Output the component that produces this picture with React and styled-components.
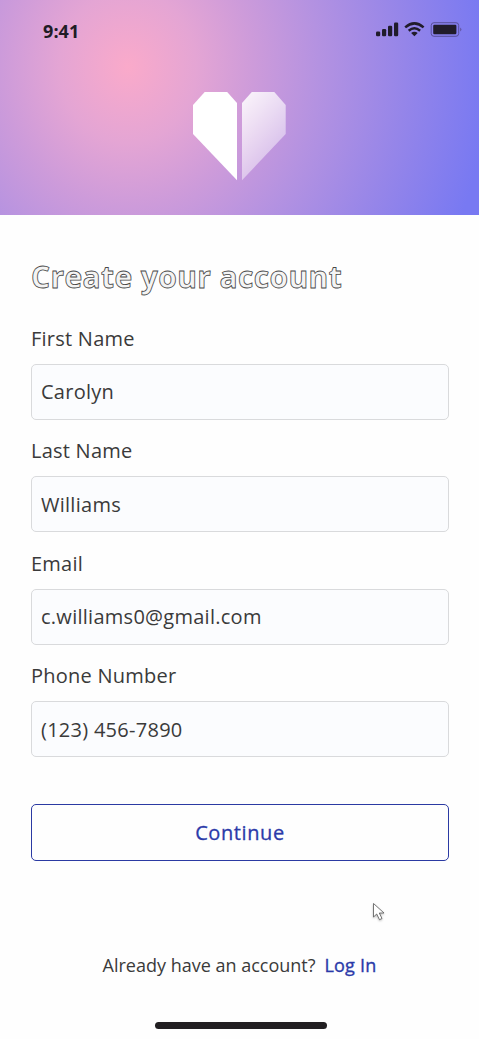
import React from "react";
import styled, { createGlobalStyle } from "styled-components";

const GlobalStyle = createGlobalStyle`
  * { box-sizing: border-box; }
  body { margin: 0; background: #fefefe; font-family: "Open Sans", sans-serif; color: #3a3a3a; }
`;

const Screen = styled.div`
  position: relative;
  display: flex;
  flex-direction: column;
  width: 479px;
  height: 1039px;
  overflow: hidden;
  background: #fefefe;
`;

const Header = styled.header`
  display: flex;
  flex-direction: column;
  align-items: center;
  flex: none;
  height: 215px;
  background: radial-gradient(ellipse 360px 400px at 128px 67px, #faaaca 0%, #e4a5d4 19%, #cd9bda 35%, #b492e1 53%, #9585e9 77%, #7879f2 100%);
`;

const StatusBar = styled.div`
  display: flex;
  justify-content: space-between;
  align-self: stretch;
  height: 92px;
  padding: 19px 17px 0 43px;
`;

const Time = styled.time`
  color: #211c26;
  font-size: 18px;
  font-weight: 700;
  line-height: 25px;
  letter-spacing: 0.1px;
`;

const Title = styled.h1`
  margin: 0 0 27.5px;
  color: #f4f4f4;
  -webkit-text-stroke: 0.8px #484848;
  font-size: 30px;
  font-weight: 700;
  line-height: 40px;
  letter-spacing: 0.38px;
`;

const Form = styled.form`
  display: flex;
  flex-direction: column;
  padding: 42px 30px 0 31px;
`;

const Field = styled.label`
  display: flex;
  flex-direction: column;
  gap: 11px;
  height: 112.6px;
  font-size: 20px;
  font-weight: 400;
  line-height: 28px;
  letter-spacing: 0.24px;
`;

const Input = styled.input`
  width: 100%;
  height: 56px;
  margin: 0;
  padding: 0 9px;
  border: 1px solid #d9dadc;
  border-radius: 5px;
  outline: none;
  background: #fbfcfe;
  color: #3a3a3a;
  font: 400 20px "Open Sans", sans-serif;
  letter-spacing: 0.27px;
`;

const ContinueButton = styled.button`
  height: 57px;
  margin: 28.9px 0 0;
  padding: 0;
  border: 1.5px solid #2b3aa3;
  border-radius: 5px;
  background: #fefefe;
  color: #2b3aa9;
  font: 400 20px "Open Sans", sans-serif;
  -webkit-text-stroke: 0.3px #2b3aa9;
  letter-spacing: 0.6px;
`;

const LoginPrompt = styled.p`
  display: flex;
  justify-content: center;
  gap: 9px;
  margin: 91px 0 0;
  font-size: 18px;
  line-height: 26px;
`;

const LoginLink = styled.a`
  color: #2b3aa9;
  font-weight: 400;
  -webkit-text-stroke: 0.35px #2b3aa9;
  letter-spacing: 0.2px;
  text-decoration: none;
`;

const HomeIndicator = styled.div`
  width: 172px;
  height: 7px;
  margin: auto auto 10px 155px;
  border-radius: 4px;
  background: #211f21;
`;

const Pointer = styled.svg`
  position: absolute;
  left: 371px;
  top: 901px;
  filter: drop-shadow(0 1px 1px #0004);
`;

function StatusIcons() {
  return (
    <svg width="88" height="24" viewBox="374 19 88 24" fill="#211c2b">
      <rect x="376" y="31.5" width="4.2" height="4.7" rx="1.2" />
      <rect x="382" y="29" width="4.2" height="7.2" rx="1.2" />
      <rect x="388" y="25.7" width="4.2" height="10.5" rx="1.2" />
      <rect x="394" y="22.5" width="4.2" height="13.7" rx="1.2" />
      <g fill="none" stroke="#211c2b" strokeWidth="2.5">
        <path d="M405.2 27.4Q414.4 19.3 423.6 27.4" />
        <path d="M408.7 30.7Q414.4 25.7 420.1 30.7" />
      </g>
      <path d="M411.1 33Q414.4 30.4 417.7 33L414.4 36.3Z" />
      <rect x="431.2" y="22.7" width="27.5" height="13.6" rx="2.8" fill="none" stroke="#59509b" strokeWidth="1" />
      <rect x="433.2" y="24.7" width="23.2" height="9.6" rx="1.2" />
      <path d="M460 27.5Q463 29.5 460 31.5Z" fill="#665bad" />
    </svg>
  );
}

function HeartLogo() {
  return (
    <svg width="94" height="90" viewBox="193 92 94 90">
      <defs>
        <linearGradient id="facet" x1="0.2" y1="0" x2="0.7" y2="1">
          <stop offset="0" stopColor="#fff" stopOpacity="0.86" />
          <stop offset="1" stopColor="#fff" stopOpacity="0.3" />
        </linearGradient>
      </defs>
      <path d="M204.7 92H227.2L237 103V180.3L193 134V105Z" fill="#fff" />
      <path d="M251.8 92H274.3L285.7 105V134L242 180.3V103Z" fill="url(#facet)" />
    </svg>
  );
}

const fields = [
  { label: "First Name", value: "Carolyn" },
  { label: "Last Name", value: "Williams" },
  { label: "Email", value: "c.williams0@gmail.com" },
  { label: "Phone Number", value: "(123) 456-7890" },
];

export default function App() {
  return (
    <Screen>
      <GlobalStyle />
      <Header>
        <StatusBar>
          <Time>9:41</Time>
          <StatusIcons />
        </StatusBar>
        <HeartLogo />
      </Header>
      <Form>
        <Title>Create your account</Title>
        {fields.map(({ label, value }) => (
          <Field key={label}>
            {label}
            <Input defaultValue={value} />
          </Field>
        ))}
        <ContinueButton type="button">Continue</ContinueButton>
      </Form>
      <LoginPrompt>
        Already have an account?
        <LoginLink>Log In</LoginLink>
      </LoginPrompt>
      <HomeIndicator />
      <Pointer width="16" height="22" viewBox="0 0 16 22">
        <path d="M2.5 2.5V16L5.7 13L8.5 18.7L11 17.5L8.3 12H13Z" fill="#fff" stroke="#555" strokeWidth="0.8" />
      </Pointer>
    </Screen>
  );
}
